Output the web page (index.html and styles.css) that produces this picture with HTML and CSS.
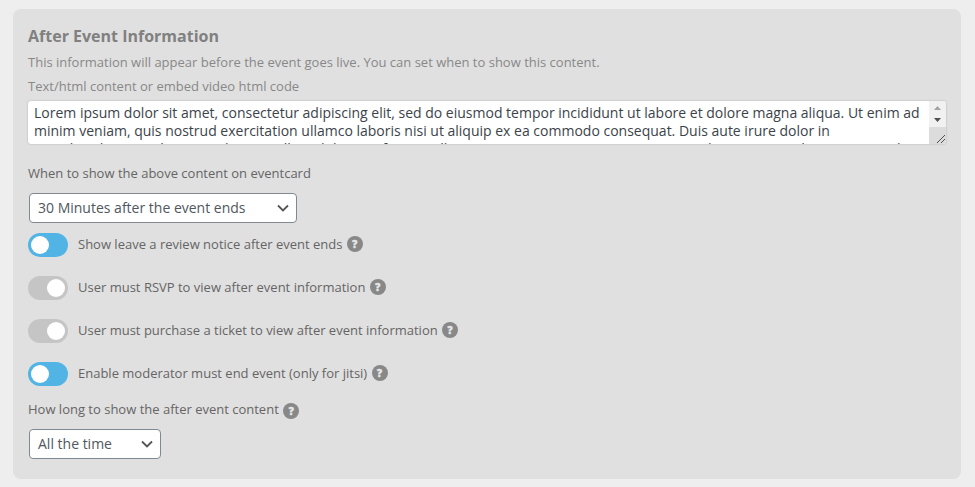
FILE: index.html
```html
<!DOCTYPE html>
<html lang="en">
<head>
<meta charset="UTF-8">
<meta name="viewport" content="width=device-width, initial-scale=1">
<title>After Event Information</title>
<link rel="stylesheet" href="styles.css">
</head>
<body>
<div class="panel">
  <h3>After Event Information</h3>
  <p class="desc">This information will appear before the event goes live. You can set when to show this content.</p>
  <p class="desc sub">Text/html content or embed video html code</p>

  <div class="textbox">
    <div class="text">Lorem ipsum dolor sit amet, consectetur adipiscing elit, sed do eiusmod tempor incididunt ut labore et dolore magna aliqua. Ut enim ad<br>minim veniam, quis nostrud exercitation ullamco laboris nisi ut aliquip ex ea commodo consequat. Duis aute irure dolor in<br>reprehenderit in voluptate velit esse cillum dolore eu fugiat nulla pariatur. Excepteur sint occaecat cupidatat non proident, sunt in culpa</div>
    <svg class="scroll" width="17" height="43" viewBox="0 0 17 43">
      <path fill="#f1f1f1" d="M0 0h17v26H0z"/>
      <path fill="#dcdcdc" d="M0 26h17v17H0z"/>
      <path fill="#a3a3a3" d="M5 9h7L8.500 5z"/>
      <path fill="#505050" d="M5 17h7l-3.500 4z"/>
      <path fill="none" stroke="#505050" d="M8 42l8-8M12 42l4-4"/>
    </svg>
  </div>

  <p class="label">When to show the above content on eventcard</p>
  <div class="select wide">
    <span>30 Minutes after the event ends</span>
    <svg width="12" height="8" viewBox="0 0 12 8"><path d="M1 1.500l5 5 5-5"/></svg>
  </div>

  <div class="row">
    <span class="toggle on"></span>
    <span class="name">Show leave a review notice after event ends <i class="help">?</i></span>
  </div>
  <div class="row">
    <span class="toggle"></span>
    <span class="name">User must RSVP to view after event information <i class="help">?</i></span>
  </div>
  <div class="row">
    <span class="toggle"></span>
    <span class="name">User must purchase a ticket to view after event information <i class="help">?</i></span>
  </div>
  <div class="row">
    <span class="toggle on"></span>
    <span class="name">Enable moderator must end event (only for jitsi) <i class="help">?</i></span>
  </div>

  <p class="label last">How long to show the after event content <i class="help">?</i></p>
  <div class="select">
    <span>All the time</span>
    <svg width="12" height="8" viewBox="0 0 12 8"><path d="M1 1.500l5 5 5-5"/></svg>
  </div>
</div>
</body>
</html>
```
FILE: styles.css
```css
* {
  box-sizing: border-box;
}
body {
  margin: 0;
  padding: 9px 14px 8px 13px;
  background: #eeeeee;
  font-family: "Open Sans", "Noto Sans", sans-serif;
  font-size: 13px;
  color: #656565;
}
.panel {
  height: 470px;
  padding: 15px 15px 0;
  background: #e0e0e0;
  border-radius: 8px;
}
h3 {
  margin: 0;
  font-size: 16px;
  line-height: 24px;
  color: #808080;
}
p {
  margin: 0;
}
.desc {
  margin-top: 2px;
  line-height: 24px;
  color: #888;
}
.sub {
  margin-top: 0;
}
.textbox {
  display: flex;
  height: 43px;
  margin-top: 3px;
  margin-bottom: 17px;
  background: #fff;
  border-radius: 3px;
  box-shadow: 0 0 2px rgba(0, 0, 0, 0.25);
  overflow: hidden;
}
.text {
  flex: 1;
  padding: 3px 0 0 6px;
  font-size: 14px;
  line-height: 18px;
  color: #3c434a;
  white-space: nowrap;
}
.scroll {
  flex: none;
}
.label {
  display: flex;
  align-items: center;
  height: 24px;
}
.select {
  display: flex;
  align-items: center;
  justify-content: space-between;
  width: 132px;
  height: 30px;
  margin: 8px 0 0 1px;
  padding: 0 7px 0 8px;
  background: #fff;
  border: 1px solid #7e8993;
  border-radius: 4px;
  font-size: 14px;
  color: #50575e;
}
.select span {
  margin-top: -1px;
}
.wide {
  width: 268px;
  margin-bottom: 10px;
}
.select path {
  fill: none;
  stroke: #555;
  stroke-width: 1.8;
}
.row {
  display: flex;
  align-items: center;
  height: 24px;
  margin-bottom: 19px;
}
.name {
  display: flex;
  align-items: center;
  margin-top: -2px;
}
.toggle {
  width: 40px;
  height: 24px;
  margin-right: 10px;
  padding: 3px;
  background: #c5c5c5;
  border-radius: 12px;
}
.toggle::before {
  content: "";
  display: block;
  width: 18px;
  height: 18px;
  margin-left: auto;
  background: #fff;
  border-radius: 50%;
}
.toggle.on {
  background: #52b4e4;
}
.toggle.on::before {
  margin-left: 0;
}
.help {
  width: 16px;
  height: 16px;
  margin-left: 4.400px;
  background: #888;
  border-radius: 50%;
  color: #e8e8e8;
  font-size: 10px;
  font-style: normal;
  font-weight: 800;
  line-height: 16px;
  text-align: center;
  -webkit-text-stroke: 0.4px #e8e8e8;
}
.last {
  margin-top: -8px;
}
.last .help {
  margin-top: 3px;
}
```
